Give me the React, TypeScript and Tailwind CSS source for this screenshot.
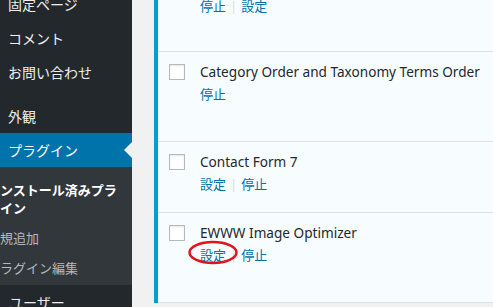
const font = { fontFamily: '"Noto Sans", "Noto Sans CJK JP", sans-serif' }

type Plugin = {
    name: string
    actions: string[]
    tall: boolean
    circled?: boolean
}

const plugins: Plugin[] = [
    { name: 'Category Order and Taxonomy Terms Order', actions: ['停止'], tall: true },
    { name: 'Contact Form 7', actions: ['設定', '停止'], tall: false },
    { name: 'EWWW Image Optimizer', actions: ['設定', '停止'], tall: true, circled: true },
]

function MenuItem({ label, active }: { label: string, active?: boolean }) {
    return (
        <div className={`relative h-[34px] flex items-center pl-[8px] text-[14px] ${active ? 'bg-[#0073aa] text-white' : 'text-[#eeeeee]'}`}>
            {label}
            {active && (
                <span className="absolute right-0 top-1/2 -translate-y-1/2 w-0 h-0 border-y-[8px] border-y-transparent border-r-[8px] border-r-[#f1f1f1]"></span>
            )}
        </div>
    )
}

function Actions({ items, circled }: { items: string[], circled?: boolean }) {
    return (
        <div className="relative flex items-center h-[20px] text-[13px] text-[#0073aa] mt-[3px]">
            {items.map((a, i) => (
                <span key={i} className="flex items-center">
                    {i > 0 && <span className="mx-[4px] text-[#dddddd]">|</span>}
                    {a}
                </span>
            ))}
            {circled && (
                <svg className="absolute left-[-12px] top-[-6px]" width="52" height="25" viewBox="0 0 52 25">
                    <ellipse cx="25" cy="12.5" rx="23.5" ry="10.5" fill="none" stroke="#e0141e" strokeWidth="2.5" />
                </svg>
            )}
        </div>
    )
}

export default function App() {
    return (
        <div className="flex w-[493px] h-[307px] overflow-hidden bg-[#f1f1f1]" style={font}>
            {/* Admin sidebar */}
            <div className="w-[132px] shrink-0 bg-[#23282d]">
                <div className="-mt-[13px]">
                    <MenuItem label="固定ページ" />
                    <MenuItem label="コメント" />
                    <MenuItem label="お問い合わせ" />
                    <div className="h-[10px]"></div>
                    <MenuItem label="外観" />
                    <MenuItem label="プラグイン" active />
                    <div className="bg-[#32373c] pt-[8px] pb-[2px] text-[13px] leading-[18px] overflow-hidden">
                        <div className="py-[6px] -ml-[13px] font-bold text-white whitespace-nowrap">
                            インストール済みプラ<br />グイン
                        </div>
                        <div className="py-[6px] -ml-[13px] text-[#b4b9be] whitespace-nowrap">新規追加</div>
                        <div className="py-[6px] -ml-[13px] text-[#b4b9be] whitespace-nowrap">プラグイン編集</div>
                    </div>
                    <div className="h-[34px] flex items-center pl-[9px] text-[14px] text-[#eeeeee]">ユーザー</div>
                </div>
            </div>

            {/* Plugin list */}
            <div className="flex-1 pl-[22px]">
                <div className="-mt-[38px] bg-[#f7fcfe] border-l-4 border-[#00a0d2]">
                    <div className="h-[90px] border-b border-[#e1e1e1] pl-[42px] pt-[32px]">
                        <Actions items={['停止', '設定']} />
                    </div>
                    {plugins.map((p, i) => (
                        <div key={i} className={`flex border-b border-[#e1e1e1] ${p.tall ? 'h-[90px]' : 'h-[71px]'}`}>
                            <div className="w-[42px] pl-[11px] pt-[12px]">
                                <div className="w-[16px] h-[16px] bg-white border border-[#b4b9be] shadow-[inset_0_1px_2px_rgba(0,0,0,0.1)]"></div>
                            </div>
                            <div className="pt-[10px]">
                                <div className="h-[20px] flex items-center text-[13.6px] text-[#23282d] whitespace-nowrap">{p.name}</div>
                                <Actions items={p.actions} circled={p.circled} />
                            </div>
                        </div>
                    ))}
                </div>
            </div>
        </div>
    )
}
